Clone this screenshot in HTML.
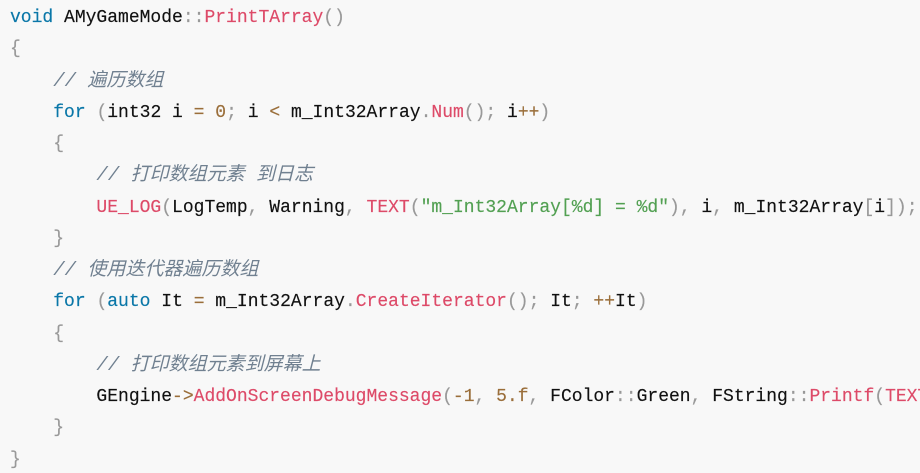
<!DOCTYPE html>
<html><head><meta charset="utf-8"><style>
html,body{margin:0;padding:0;background:#f8f8f8;width:920px;height:473px;overflow:hidden}
pre{margin:0;padding:3px 0 0 10px;width:910px;height:470px;overflow:hidden;font-family:"Liberation Mono","Noto Sans CJK SC",monospace;font-size:18px;line-height:31.25px;color:#111;white-space:pre;-webkit-text-stroke:0.15px currentColor}
.k{color:#0a77a8}.f{color:#dd4a68}.p{color:#999}.o{color:#9a6e3a}.s{color:#52a052}.c{color:#708090;font-style:italic;font-size:19px;-webkit-text-stroke:0}
</style></head><body><pre><span class="k">void</span> AMyGameMode<span class="p">::</span><span class="f">PrintTArray</span><span class="p">()</span>
<span class="p">{</span>
    <span class="c">// 遍历数组</span>
    <span class="k">for</span> <span class="p">(</span>int32 i <span class="o">=</span> <span class="o">0</span><span class="p">;</span> i <span class="o">&lt;</span> m_Int32Array<span class="p">.</span><span class="f">Num</span><span class="p">();</span> i<span class="o">++</span><span class="p">)</span>
    <span class="p">{</span>
        <span class="c">// 打印数组元素 到日志</span>
        <span class="f">UE_LOG</span><span class="p">(</span>LogTemp<span class="p">,</span> Warning<span class="p">,</span> <span class="f">TEXT</span><span class="p">(</span><span class="s">"m_Int32Array[%d] = %d"</span><span class="p">),</span> i<span class="p">,</span> m_Int32Array<span class="p">[</span>i<span class="p">]);</span>
    <span class="p">}</span>
    <span class="c">// 使用迭代器遍历数组</span>
    <span class="k">for</span> <span class="p">(</span><span class="k">auto</span> It <span class="o">=</span> m_Int32Array<span class="p">.</span><span class="f">CreateIterator</span><span class="p">();</span> It<span class="p">;</span> <span class="o">++</span>It<span class="p">)</span>
    <span class="p">{</span>
        <span class="c">// 打印数组元素到屏幕上</span>
        GEngine<span class="o">-&gt;</span><span class="f">AddOnScreenDebugMessage</span><span class="p">(</span><span class="o">-1</span><span class="p">,</span> <span class="o">5.f</span><span class="p">,</span> FColor<span class="p">::</span>Green<span class="p">,</span> FString<span class="p">::</span><span class="f">Printf</span><span class="p">(</span><span class="f">TEXT</span><span class="p">(</span><span class="s">"%d"</span><span class="p">),</span> *It<span class="p">));</span>
    <span class="p">}</span>
<span class="p">}</span></pre></body></html>
